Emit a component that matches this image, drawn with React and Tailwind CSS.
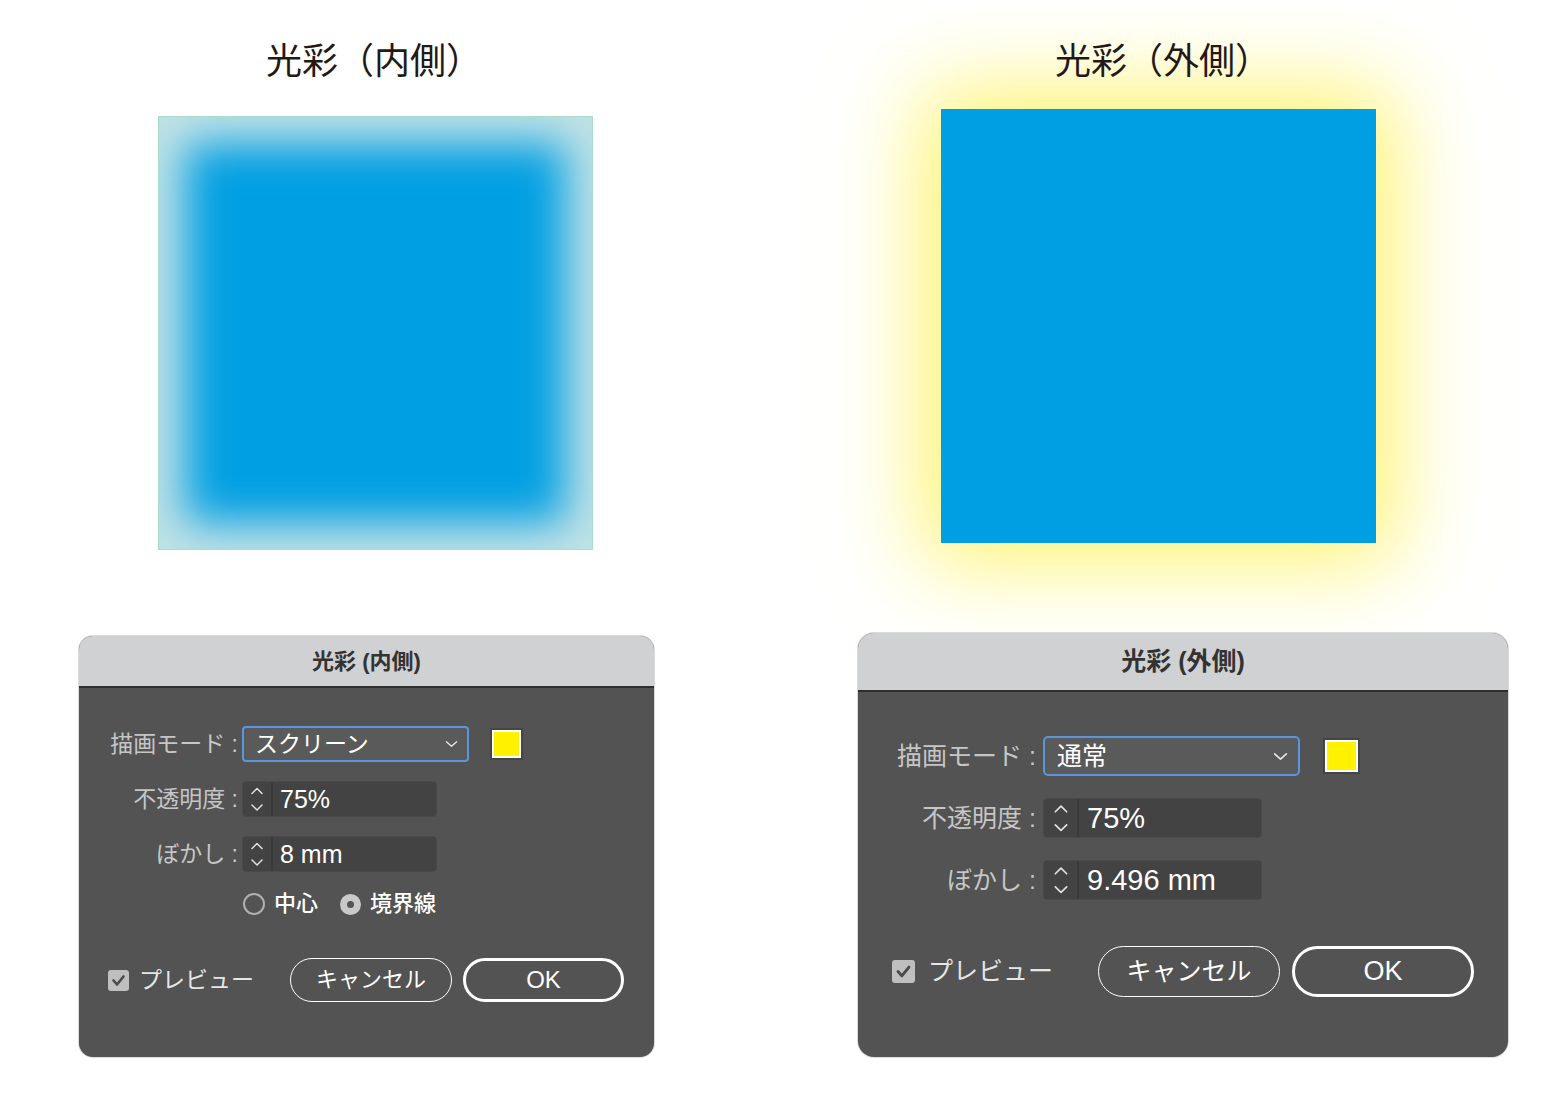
import React from "react";

const SANS = "font-['Liberation_Sans','Noto_Sans_CJK_JP',sans-serif]";

function SelectChevron({ w, h }) {
  return (
    <svg width={w} height={h} viewBox="0 0 14 8" fill="none">
      <path d="M1.5 1.5 L7 6.5 L12.5 1.5" stroke="#e6e6e6" strokeWidth="1.5" strokeLinecap="round" strokeLinejoin="round" />
    </svg>
  );
}

function StepArrows({ w, h }) {
  return (
    <svg width={w} height={h} viewBox="0 0 14 30" fill="none">
      <path d="M2 9.5 L7 4.5 L12 9.5" stroke="#e0e0e0" strokeWidth="1.5" strokeLinecap="round" strokeLinejoin="round" />
      <path d="M2 21 L7 26 L12 21" stroke="#e0e0e0" strokeWidth="1.5" strokeLinecap="round" strokeLinejoin="round" />
    </svg>
  );
}

function Check({ s }) {
  return (
    <svg width={s} height={s} viewBox="0 0 21 21" fill="none">
      <path d="M5.5 10.5 L9 14.5 L15.5 6.5" stroke="#4a4a4a" strokeWidth="2.6" strokeLinecap="round" strokeLinejoin="round" />
    </svg>
  );
}

function LeftDialog() {
  return (
    <div className={`ml-[79px] mt-[86px] w-[575px] h-[421px] rounded-[14px] overflow-hidden bg-[#535353] shadow-[0_0_0_1px_#dadada] flex flex-col ${SANS}`}>
      <div className="h-[52px] shrink-0 bg-[#d0d1d3] border-b-2 border-[#2e2e2e] flex items-center justify-center text-[22px] font-bold text-[#333333]">
        光彩 (内側)
      </div>
      <div className="pt-[38px] flex flex-col">
        <div className="flex items-center h-[36px]">
          <div className="w-[159px] text-right text-[23px] text-[#c6c6c6] leading-none">描画モード :</div>
          <div className="ml-[4px] w-[227px] h-[36px] rounded-[4px] border-2 border-[#5b95dc] bg-[#5a5a5a] flex items-center pl-[11px] pr-[9px] justify-between">
            <span className="text-[23px] text-white leading-none">スクリーン</span>
            <SelectChevron w={13} h={8} />
          </div>
          <div className="ml-[21px] w-[33px] h-[32px] bg-[#454545] p-[2px]">
            <div className="w-full h-full border-2 border-white bg-[#fff100]"></div>
          </div>
        </div>
        <div className="flex items-center h-[36px] mt-[19px]">
          <div className="w-[159px] text-right text-[23px] text-[#c6c6c6] leading-none">不透明度 :</div>
          <div className="ml-[4px] w-[195px] h-[36px] rounded-[4px] border border-[#4a4a4a] bg-[#434343] flex items-center">
            <div className="w-[30px] h-full flex items-center justify-center border-r-2 border-[#3a3a3a]">
              <StepArrows w={14} h={30} />
            </div>
            <span className="ml-[7px] text-[25px] text-white leading-none">75%</span>
          </div>
        </div>
        <div className="flex items-center h-[36px] mt-[19px]">
          <div className="w-[159px] text-right text-[23px] text-[#c6c6c6] leading-none">ぼかし :</div>
          <div className="ml-[4px] w-[195px] h-[36px] rounded-[4px] border border-[#4a4a4a] bg-[#434343] flex items-center">
            <div className="w-[30px] h-full flex items-center justify-center border-r-2 border-[#3a3a3a]">
              <StepArrows w={14} h={30} />
            </div>
            <span className="ml-[7px] text-[25px] text-white leading-none">8 mm</span>
          </div>
        </div>
        <div className="flex items-center h-[22px] mt-[21px] pl-[164px]">
          <div className="w-[22px] h-[22px] rounded-full border-2 border-[#b0b0b0]"></div>
          <span className="ml-[9px] text-[22px] text-white leading-none font-medium">中心</span>
          <div className="ml-[22px] w-[21px] h-[21px] rounded-full bg-[#c9c9c9] flex items-center justify-center">
            <div className="w-[7px] h-[7px] rounded-full bg-[#555555]"></div>
          </div>
          <span className="ml-[9px] text-[22px] text-white leading-none font-medium">境界線</span>
        </div>
        <div className="flex items-center h-[44px] mt-[43px] pl-[29px]">
          <div className="w-[182px] flex items-center">
            <div className="w-[21px] h-[21px] rounded-[3px] bg-[#bfbfbf] flex items-center justify-center">
              <Check s={21} />
            </div>
            <span className="ml-[10px] text-[23px] text-[#e6e6e6] leading-none">プレビュー</span>
          </div>
          <div className="w-[162px] h-[44px] rounded-full border-[1.5px] border-white flex items-center justify-center text-[22px] text-white leading-none">
            キャンセル
          </div>
          <div className="ml-[11px] w-[161px] h-[44px] rounded-full border-[3px] border-white flex items-center justify-center text-[24px] text-white leading-none">
            OK
          </div>
        </div>
      </div>
    </div>
  );
}

function RightDialog() {
  return (
    <div className={`ml-[77px] mt-[90px] w-[650px] h-[424px] rounded-[16px] overflow-hidden bg-[#535353] shadow-[0_0_0_1px_#dadada] flex flex-col ${SANS}`}>
      <div className="h-[59px] shrink-0 bg-[#d0d1d3] border-b-2 border-[#2e2e2e] flex items-center justify-center text-[25px] font-bold text-[#333333]">
        光彩 (外側)
      </div>
      <div className="pt-[44px] flex flex-col">
        <div className="flex items-center h-[40px]">
          <div className="w-[178px] text-right text-[25px] text-[#c6c6c6] leading-none">描画モード :</div>
          <div className="ml-[7px] w-[257px] h-[40px] rounded-[5px] border-2 border-[#5b95dc] bg-[#5a5a5a] flex items-center pl-[12px] pr-[10px] justify-between">
            <span className="text-[25px] text-white leading-none">通常</span>
            <SelectChevron w={15} h={9} />
          </div>
          <div className="ml-[23px] w-[37px] h-[36px] bg-[#454545] p-[2px]">
            <div className="w-full h-full border-2 border-white bg-[#fff100]"></div>
          </div>
        </div>
        <div className="flex items-center h-[40px] mt-[22px]">
          <div className="w-[178px] text-right text-[25px] text-[#c6c6c6] leading-none">不透明度 :</div>
          <div className="ml-[7px] w-[219px] h-[40px] rounded-[4px] border border-[#4a4a4a] bg-[#434343] flex items-center">
            <div className="w-[35px] h-full flex items-center justify-center border-r-2 border-[#3a3a3a]">
              <StepArrows w={16} h={34} />
            </div>
            <span className="ml-[8px] text-[29px] text-white leading-none">75%</span>
          </div>
        </div>
        <div className="flex items-center h-[40px] mt-[22px]">
          <div className="w-[178px] text-right text-[25px] text-[#c6c6c6] leading-none">ぼかし :</div>
          <div className="ml-[7px] w-[219px] h-[40px] rounded-[4px] border border-[#4a4a4a] bg-[#434343] flex items-center">
            <div className="w-[35px] h-full flex items-center justify-center border-r-2 border-[#3a3a3a]">
              <StepArrows w={16} h={34} />
            </div>
            <span className="ml-[8px] text-[29px] text-white leading-none">9.496 mm</span>
          </div>
        </div>
        <div className="flex items-center h-[51px] mt-[46px] pl-[34px]">
          <div className="w-[206px] flex items-center">
            <div className="w-[23px] h-[23px] rounded-[3px] bg-[#bfbfbf] flex items-center justify-center">
              <Check s={23} />
            </div>
            <span className="ml-[13px] text-[25px] text-[#e6e6e6] leading-none">プレビュー</span>
          </div>
          <div className="w-[182px] h-[51px] rounded-full border-[1.5px] border-white flex items-center justify-center text-[25px] text-white leading-none">
            キャンセル
          </div>
          <div className="ml-[12px] w-[182px] h-[51px] rounded-full border-[3px] border-white flex items-center justify-center text-[27px] text-white leading-none">
            OK
          </div>
        </div>
      </div>
    </div>
  );
}

export default function App() {
  return (
    <div className="w-[1562px] h-[1114px] bg-white overflow-hidden flex">
      <div className="w-[781px] shrink-0 flex flex-col items-start">
        <div className="relative z-10 mt-[38px] ml-[174px] w-[400px] h-[40px] text-center text-[36px] leading-[40px] text-[#231815] font-['Noto_Sans_CJK_JP',sans-serif]">
          光彩（内側）
        </div>
        <div className="mt-[38px] ml-[158px] w-[435px] h-[434px] border border-[#a9dcc9] bg-[#009fe3] shadow-[inset_0_0_44px_26px_#c3e3e6]"></div>
        <LeftDialog />
      </div>
      <div className="w-[781px] shrink-0 flex flex-col items-start">
        <div className="relative z-10 mt-[38px] ml-[182px] w-[400px] h-[40px] text-center text-[36px] leading-[40px] text-[#231815] font-['Noto_Sans_CJK_JP',sans-serif]">
          光彩（外側）
        </div>
        <div className="mt-[31px] ml-[160px] w-[435px] h-[434px] bg-[#009fe3] shadow-[0_0_85px_18px_#fff36a]"></div>
        <RightDialog />
      </div>
    </div>
  );
}
